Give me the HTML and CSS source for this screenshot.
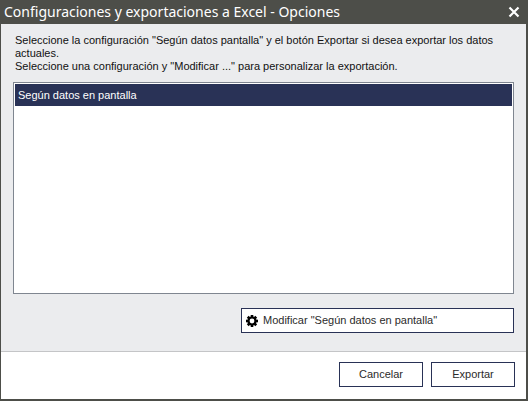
FILE: index.html
```html
<!DOCTYPE html>
<html lang="es">
<head>
<meta charset="utf-8">
<meta name="viewport" content="width=device-width, initial-scale=1">
<title>Configuraciones y exportaciones a Excel - Opciones</title>
<link rel="stylesheet" href="styles.css">
</head>
<body>
<main class="dialog">
  <header class="titlebar">
    <h1 class="title">Configuraciones y exportaciones a Excel - Opciones</h1>
    <button class="close" type="button" aria-label="Cerrar">
      <svg class="close-icon" viewBox="0 0 12 12" aria-hidden="true"><path d="M1.5 1.5 10.5 10.5M10.5 1.5 1.5 10.5" fill="none" stroke="currentColor" stroke-width="2.2"/></svg>
    </button>
  </header>
  <section class="content">
    <p class="intro" id="intro">Seleccione la configuración "Según datos pantalla" y el botón Exportar si desea exportar los datos actuales.<br>Seleccione una configuración y "Modificar ..." para personalizar la exportación.</p>
    <ul class="list" role="listbox" aria-labelledby="intro">
      <li class="item selected" role="option" aria-selected="true" tabindex="0">Según datos en pantalla</li>
    </ul>
    <button class="button modify" type="button">
      <svg class="gear" viewBox="0 0 12 12" aria-hidden="true">
        <g fill="currentColor">
          <rect x="4.7" y="0" width="2.6" height="12"/>
          <rect x="4.7" y="0" width="2.6" height="12" transform="rotate(45 6 6)"/>
          <rect x="4.7" y="0" width="2.6" height="12" transform="rotate(90 6 6)"/>
          <rect x="4.7" y="0" width="2.6" height="12" transform="rotate(135 6 6)"/>
          <circle cx="6" cy="6" r="4.6"/>
        </g>
        <circle cx="6" cy="6" r="2.4" fill="#fff"/>
      </svg>
      Modificar "Según datos en pantalla"
    </button>
  </section>
  <footer class="footer">
    <button class="button" type="button">Cancelar</button>
    <button class="button" type="button">Exportar</button>
  </footer>
</main>
</body>
</html>
```
FILE: styles.css
```css
* {
  box-sizing: border-box;
}

body {
  margin: 0;
  color: #111;
  font: 11px/13px "Liberation Sans", Arial, sans-serif;
}

.dialog {
  display: flex;
  flex-direction: column;
  min-height: 100vh;
  border: solid #4d4e49;
  border-width: 0 2px 2px 1px;
  background: #fff;
}

.titlebar {
  display: flex;
  align-items: center;
  justify-content: space-between;
  height: 24px;
  padding: 0 6px 0 3px;
  background: #4d4e49;
  color: #fff;
}

.title {
  margin: 0;
  font: 14px/24px "Noto Sans", Tahoma, sans-serif;
  white-space: nowrap;
}

.close {
  display: flex;
  padding: 0;
  border: 0;
  background: none;
  color: inherit;
}

.close-icon {
  width: 12px;
  height: 12px;
}

.content {
  display: flex;
  flex: 1;
  flex-direction: column;
  padding: 10px 12px 18px;
  border-bottom: 1px solid #c4c5c7;
  background: #ebecee;
}

.intro {
  margin: 0 2px 9px;
}

.list {
  flex: 1;
  margin: 0 0 14px;
  padding: 1px;
  border: 1px solid #7f8690;
  background: #fff;
  list-style: none;
}

.item {
  padding: 0 3px;
  line-height: 22px;
}

.selected {
  background: #293256;
  color: #fff;
}

.button {
  min-width: 84px;
  height: 25px;
  padding: 0 4px;
  border: 1px solid #293256;
  background: #fff;
  color: #2b2b2b;
  font: inherit;
}

.modify {
  display: flex;
  align-items: center;
  align-self: flex-end;
  gap: 5px;
  width: 273px;
  max-width: 100%;
}

.gear {
  width: 12px;
  height: 12px;
  color: #000;
}

.footer {
  display: flex;
  justify-content: flex-end;
  gap: 8px;
  padding: 10px 11px 12px;
}
```
